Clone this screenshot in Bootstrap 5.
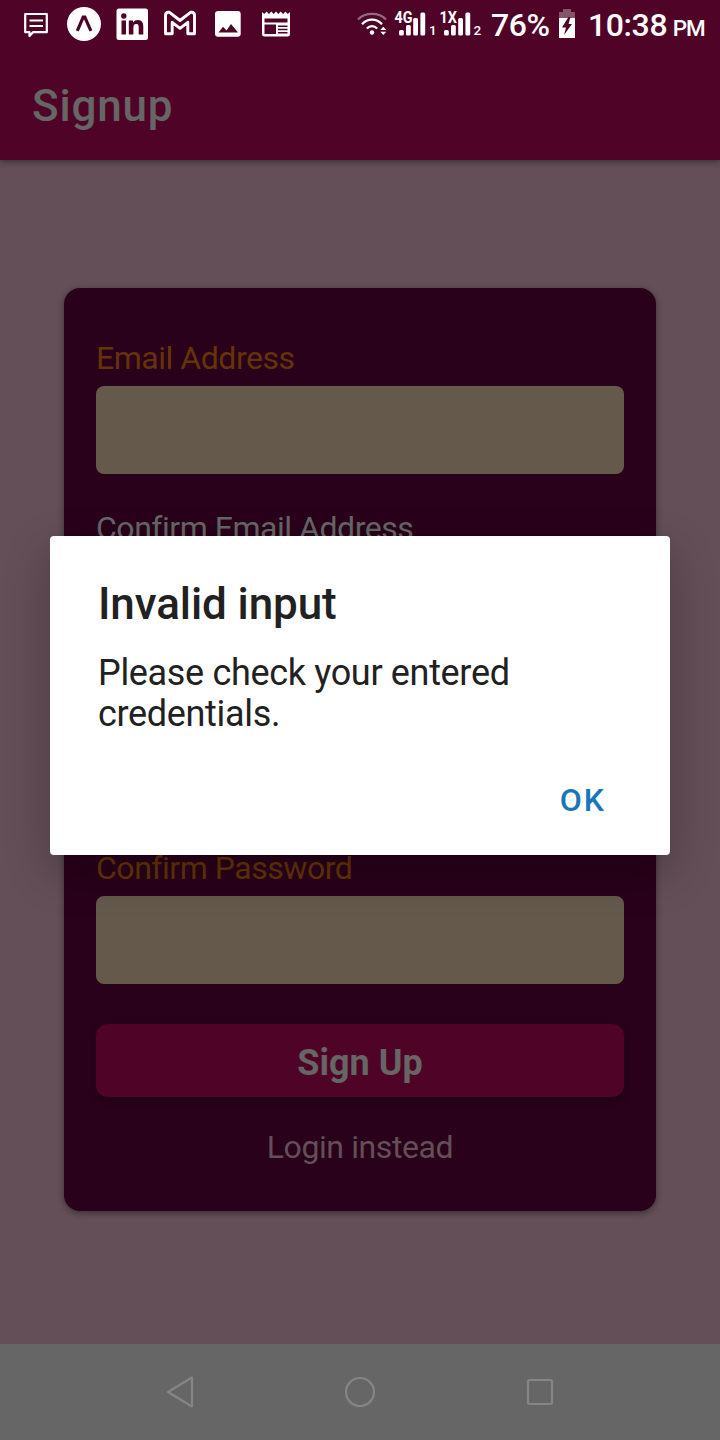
<!DOCTYPE html>
<html lang="en">
<head>
<meta charset="utf-8">
<meta name="viewport" content="width=device-width, initial-scale=1">
<title>Signup</title>
<link href="https://cdn.jsdelivr.net/npm/bootstrap@5.3.0/dist/css/bootstrap.min.css" rel="stylesheet">
<style>
  body { font-family: Roboto, sans-serif; background: #644e57; width: 720px; height: 1440px; overflow: hidden; line-height: 1.172; }
  svg { display: block; flex: none; }
  .screen { height: 1440px; }
  .top-area { background: #4f0427; height: 160px; box-shadow: 0 2px 6px rgba(0,0,0,.4); }
  .status { height: 48px; color: #fff; font-weight: 500; padding-left: 12px; }
  .status-text { font-size: 32px; line-height: 50px; letter-spacing: -.4px; white-space: nowrap; }
  .pm { font-size: 22.5px; margin-left: -2px; letter-spacing: -1px; }
  .app-title { height: 112px; padding: 6px 32px 0; color: #666; font-size: 44px; font-weight: 500; letter-spacing: .8px; }
  .signup-card { margin: 128px 64px 0; padding: 48px 32px 0; height: 923px; border-radius: 16px; background: #29011a; box-shadow: 0 2px 6px rgba(0,0,0,.4); }
  .field { height: 170px; }
  .field-label { height: 42px; margin-bottom: 8px; font-size: 32px; line-height: 44px; letter-spacing: -.47px; color: #666; }
  .invalid { color: #653308; }
  .field-box { height: 88px; border: 0; border-radius: 8px; background: #65594b; }
  .signup-btn { margin-top: 8px; height: 73px; border: 0; border-radius: 12px; background: #4f0427; color: #666; font-size: 36px; font-weight: 700; line-height: 1; box-shadow: 0 3px 6px rgba(0,0,0,.28); }
  .login-link { margin-top: 29px; font-size: 32px; line-height: 43px; letter-spacing: -.4px; color: #644e57; }
  .navbar-soft { height: 96px; background: #666; }
  .alert-box { left: 50px; top: 536px; width: 620px; height: 319px; padding: 43px 48px 0; background: #fff; color: #212121; border-radius: 4px; box-shadow: 0 16px 44px rgba(0,0,0,.25); }
  .alert-title { font-size: 44px; font-weight: 500; line-height: 50px; letter-spacing: -.1px; }
  .alert-msg { font-size: 36px; line-height: 41px; letter-spacing: -.33px; margin-top: 24px; }
  .ok-btn { font-size: 32px; font-weight: 500; line-height: 38px; letter-spacing: 2px; color: #1976b9; margin: 46px 16px 0 0; }
</style>
</head>
<body>
<div class="screen d-flex flex-column position-relative">
  <header class="top-area">
    <div class="status d-flex">
      <!-- notification icons -->
      <svg width="48" height="48" fill="none" stroke="#fff" stroke-width="2.2"><path d="M13.2 14H34.8V32.2H21L17.5 36V32.2H13.2Z" stroke-linejoin="round"/><path d="M17.5 20.5H31M17.5 26H31"/></svg>
      <svg width="48" height="48"><circle cx="24" cy="24" r="17" fill="#fff"/><path d="M17.300 30.800 23.200 17H24.800L30.900 30.800" fill="none" stroke="#4f0427" stroke-width="3.200"/></svg>
      <svg width="48" height="48"><rect x="8.5" y="8.5" width="31.500" height="31.500" rx="2.500" fill="#fff"/><g fill="#4f0427"><circle cx="15.800" cy="16" r="2.700"/><path d="M13.500 20.500h4.500v14h-4.500zM20.800 20.500H25v2q1.600-2.400 4.700-2.400c4.600 0 5.600 3 5.600 7v7.400h-4.600v-6.700c0-2 0-3.700-2.500-3.700s-2.800 1.800-2.800 3.700v6.700h-4.600z"/></g></svg>
      <svg width="48" height="48" fill="none" stroke="#fff" stroke-width="2.900" stroke-linejoin="round"><path d="M9.500 15.500Q9.500 12.300 12.300 12.300H13.500L24 20.500 34.500 12.300H35.700Q38.500 12.300 38.500 15.500V33.700H31.800V22.300L24 28.300 16.200 22.300V33.700H9.500Z"/></svg>
      <svg width="48" height="48"><rect x="11" y="11" width="25.700" height="25.700" rx="3" fill="#fff"/><path d="M14.500 32.500 19 26.700 22.500 30.500 27 24 34 32.500Z" fill="#4f0427"/></svg>
      <svg width="48" height="48"><path d="M10 12l2.300 2 2.300-2.500 2.400 2.500 2.300-2.500 2.400 2.500 2.300-2.500 2.400 2.500 2.300-2.500 2.400 2.500 2.300-2.500 2.300 2.500L38 12V34q0 2.500-2.500 2.500h-23Q10 36.500 10 34Z" fill="#fff"/><path d="M12.500 18.500h23v4h-23zM12.500 24.500H24v9.500H12.500zM26 25.500h9.500v1.500H26zM26 28.800h9.500v1.500H26zM26 32.100h9.500v1.500H26z" fill="#4f0427"/></svg>
      <!-- connectivity -->
      <svg class="ms-auto" width="134" height="48" viewBox="350 0 134 48" fill="#fff">
        <g fill="none" stroke="#fff" stroke-width="2.2"><path d="M358 19.500C365 12 379 12 386 19.500" opacity=".4"/><path d="M362 24.300C367.500 18 376.500 18 382 24.300"/><path d="M366.800 28.500C370 25.200 374 25.200 377.200 28.500"/></g>
        <circle cx="372" cy="32.500" r="2.200"/><path d="M380.300 30h6L383.300 26.700zM380.300 31.700h6L383.300 35z"/>
        <g id="bars"><rect x="399" y="30" width="4.800" height="5.500" rx="1.500"/><rect x="406" y="25" width="4.800" height="10.500" rx="1.500"/><rect x="413.200" y="18" width="4.800" height="17.500" rx="1.500"/><rect x="420.400" y="12.500" width="4.800" height="23" rx="1.500"/></g>
        <use href="#bars" x="45"/>
        <g font-family="Roboto, sans-serif"><text x="394.500" y="22.500" font-size="17" font-weight="700" textLength="18" lengthAdjust="spacingAndGlyphs">4G</text><text x="439.500" y="22.500" font-size="17" font-weight="700" textLength="17.500" lengthAdjust="spacingAndGlyphs">1X</text><text x="429" y="35" font-size="13.500">1</text><text x="473.500" y="35" font-size="13.500">2</text></g>
      </svg>
      <span class="status-text" style="width:75px;padding-left:7px">76%</span>
      <svg width="16" height="48"><path d="M0 18V12H4V9H12V12H16V18Z" fill="#83546a"/><path d="M0 18H16V38H0Z" fill="#fff"/><path d="M9.500 17 3 27.500H7L5 35 13 24H9.500L11.500 17Z" fill="#4f0427"/></svg>
      <span class="status-text" style="width:145px;padding-left:13px">10:38 <span class="pm">PM</span></span>
    </div>
    <div class="app-title d-flex align-items-center">Signup</div>
  </header>
  <main class="flex-grow-1">
    <div class="signup-card">
      <div class="field"><div class="field-label invalid">Email Address</div><div class="field-box"></div></div>
      <div class="field"><div class="field-label">Confirm Email Address</div><div class="field-box"></div></div>
      <div class="field"><div class="field-label"></div><div class="field-box"></div></div>
      <div class="field"><div class="field-label invalid">Confirm Password</div><div class="field-box"></div></div>
      <button class="btn signup-btn w-100 p-0 pt-1" type="button">Sign Up</button>
      <div class="login-link text-center">Login instead</div>
    </div>
  </main>
  <nav class="navbar-soft">
    <svg width="720" height="96" fill="none" stroke="#858585" stroke-width="2.200" stroke-linejoin="round"><path d="M168 48 192 33.500V62.500Z"/><circle cx="360" cy="48" r="14"/><rect x="528" y="36" width="24" height="24" rx="1.500"/></svg>
  </nav>
  <div class="alert-box position-absolute" role="alertdialog">
    <div class="alert-title">Invalid input</div>
    <div class="alert-msg">Please check your entered credentials.</div>
    <div class="ok-btn text-end">OK</div>
  </div>
</div>
<script src="https://cdn.jsdelivr.net/npm/bootstrap@5.3.0/dist/js/bootstrap.bundle.min.js"></script>
</body>
</html>
